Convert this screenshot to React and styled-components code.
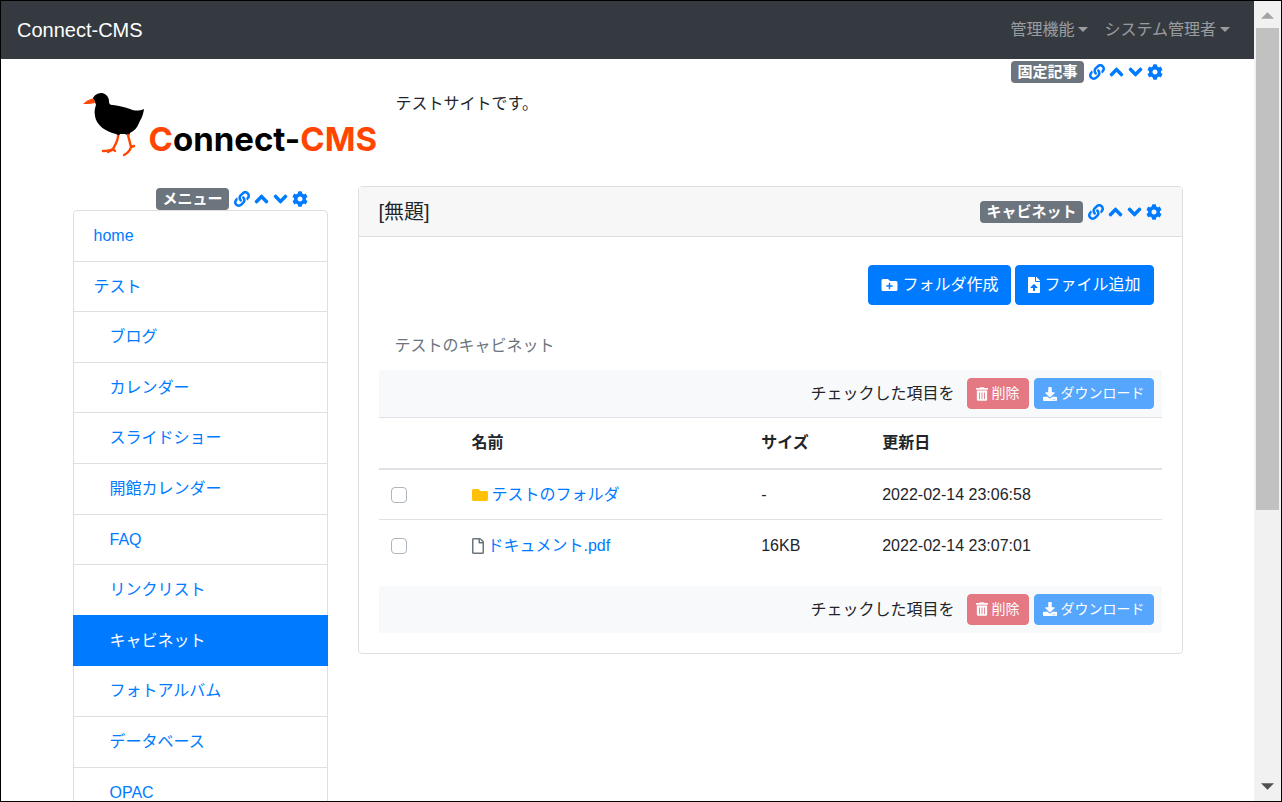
import React from "react";
import styled, { createGlobalStyle, css } from "styled-components";
import {
  FaLink, FaAngleUp, FaAngleDown, FaCog, FaFolderPlus, FaFileUpload,
  FaTrashAlt, FaDownload, FaFolder, FaRegFile,
} from "react-icons/fa";

const GlobalStyle = createGlobalStyle`
  *, *::before, *::after { box-sizing: border-box; }
  body {
    margin: 0;
    font-family: "Liberation Sans", "Noto Sans CJK JP", sans-serif;
    font-size: 16px;
    line-height: 1.6;
    color: #212529;
    background: #fff;
  }
  a { color: #007bff; text-decoration: none; }
`;

const Frame = styled.div`
  display: flex;
  height: 100vh;
  border: 1px solid #000;
  overflow: hidden;
`;

const Viewport = styled.div`
  flex: 1;
  min-width: 0;
  overflow: hidden;
`;

const ScrollTrack = styled.div`
  display: flex;
  flex-direction: column;
  align-items: center;
  width: 27px;
  padding: 11px 0;
  background: #f1f1f1;
`;

const ScrollThumb = styled.div`
  width: 23px;
  height: 62%;
  margin: 9px 0 auto;
  background: #c1c1c1;
`;

const ScrollArrow = styled.svg`
  display: block;
  width: 13px;
  height: 7px;
  fill: ${(p) => p.$color};
`;

const Navbar = styled.nav`
  display: flex;
  align-items: center;
  justify-content: space-between;
  height: 58px;
  padding: 0 16px;
  background: #343a40;
`;

const Brand = styled.a`
  color: #fff;
  font-size: 20px;
`;

const NavMenu = styled.div`
  display: flex;
`;

const NavToggle = styled.button`
  display: flex;
  align-items: center;
  gap: 4px;
  padding: 7px 8px 8px;
  border: 0;
  background: none;
  color: rgba(255, 255, 255, 0.5);
  font: inherit;
  &::after {
    content: "";
    border: 5px solid transparent;
    border-top-color: currentColor;
    border-bottom: 0;
  }
`;

const Container = styled.div`
  max-width: 1140px;
  margin: 0 auto;
`;

const FrameTools = styled.div`
  display: flex;
  align-items: center;
  justify-content: flex-end;
  gap: 4px;
  padding: ${(p) => p.$pad || "0"};
`;

const Badge = styled.span`
  margin-right: 1px;
  padding: 3px 6px;
  border-radius: 4px;
  background: #6c757d;
  color: #fff;
  font-size: 15px;
  font-weight: 700;
  line-height: 16px;
`;

const ToolIcon = styled.a`
  display: flex;
  align-items: center;
  height: 16px;
  svg {
    width: ${(p) => p.$width}px;
    height: ${(p) => p.$height || 16}px;
  }
`;

const SiteHeader = styled.header`
  padding: 2px 15px 0;
`;

const HeaderBody = styled.div`
  display: flex;
  align-items: flex-start;
  gap: 16px;
  padding: 8px 8px 7px;
`;

const LogoLink = styled.a`
  display: flex;
  gap: 4px;
  height: 68px;
`;

const Bird = styled.svg`
  width: 64px;
  height: 68px;
`;

const Wordmark = styled.span`
  width: 231px;
  padding-top: 22px;
  font-family: Inter, sans-serif;
  font-size: 33px;
  font-weight: 700;
  line-height: 52px;
  white-space: nowrap;
  color: #000;
`;

const Accent = styled.span`
  color: #ff4500;
`;

const HeaderText = styled.p`
  margin: 0;
`;

const Columns = styled.div`
  display: grid;
  grid-template-columns: 1fr 3fr;
  align-items: start;
  padding-top: 20px;
`;

const Sidebar = styled.aside`
  padding: 2px 15px 0;
`;

const Main = styled.main`
  padding: 0 15px;
`;

const MenuList = styled.nav`
  display: flex;
  flex-direction: column;
  border: 1px solid #dfdfdf;
  border-radius: 4px;
`;

const MenuItem = styled.a`
  padding: 12px 20px 12px ${(p) => (p.$sub ? 36 : 20)}px;
  border-bottom: 1px solid #dfdfdf;
  ${(p) => p.$active && css`
    margin: -1px -1px 0;
    padding-top: 13px;
    padding-left: 37px;
    border-color: #007bff;
    background: #007bff;
    color: #fff;
  `}
`;

const Card = styled.section`
  border: 1px solid #dfdfdf;
  border-radius: 4px;
`;

const CardHeader = styled.header`
  display: flex;
  align-items: center;
  justify-content: space-between;
  height: 50px;
  padding: 0 20px;
  border-bottom: 1px solid #dfdfdf;
  background: #f7f7f7;
`;

const CardTitle = styled.h2`
  margin: 0;
  font-size: 20px;
  font-weight: 400;
  line-height: 26px;
`;

const CardBody = styled.div`
  padding: 20px;
`;

const ActionBar = styled.div`
  display: flex;
  align-items: center;
  justify-content: flex-end;
  gap: ${(p) => (p.$shaded ? 5 : 4)}px;
  padding: 8px;
  background: ${(p) => (p.$shaded ? "#f8f9fa" : "none")};
`;

const ActionLabel = styled.span`
  margin-right: 7px;
`;

const Button = styled.button`
  display: flex;
  align-items: center;
  gap: 4px;
  padding: 6px 12px;
  border: 1px solid ${(p) => p.$color || "#007bff"};
  border-radius: 4px;
  background: ${(p) => p.$color || "#007bff"};
  color: #fff;
  font: inherit;
  ${(p) => p.$small && css`
    height: 31px;
    padding: 0 8px;
    font-size: 14px;
    opacity: 0.65;
  `}
`;

const Glyph = styled.span`
  display: flex;
  color: ${(p) => p.$color || "inherit"};
  svg {
    width: ${(p) => p.$width}px;
    height: ${(p) => p.$height || 16}px;
  }
`;

const Breadcrumb = styled.div`
  padding: 20px 16px 12px;
  color: #6c757d;
`;

const FileTable = styled.table`
  width: 100%;
  margin-bottom: 15px;
  border-collapse: collapse;
  table-layout: fixed;
`;

const Th = styled.th`
  width: ${(p) => p.$width || "auto"};
  padding: 12px;
  border-top: 1px solid #dee2e6;
  border-bottom: 2px solid #dee2e6;
  text-align: left;
`;

const Td = styled.td`
  height: 51px;
  padding: 12px;
  border-top: 1px solid #dee2e6;
`;

const FileName = styled.span`
  display: flex;
  align-items: center;
  gap: 4px;
`;

const Checkbox = styled.input`
  appearance: none;
  display: block;
  width: 16px;
  height: 16px;
  margin: 0;
  border: 1px solid #adb5bd;
  border-radius: 4px;
  background: #fff;
`;

const menu = [
  ["home", false], ["テスト", false], ["ブログ", true], ["カレンダー", true],
  ["スライドショー", true], ["開館カレンダー", true], ["FAQ", true],
  ["リンクリスト", true], ["キャビネット", true], ["フォトアルバム", true],
  ["データベース", true], ["OPAC", true],
];

const files = [
  {
    name: "テストのフォルダ",
    size: "-",
    date: "2022-02-14 23:06:58",
    icon: <Glyph $width={16} $color="#ffc107"><FaFolder /></Glyph>,
  },
  {
    name: "ドキュメント.pdf",
    size: "16KB",
    date: "2022-02-14 23:07:01",
    icon: <Glyph $width={12} $color="#6c757d"><FaRegFile /></Glyph>,
  },
];

function Tools({ label, pad }) {
  return (
    <FrameTools $pad={pad}>
      <Badge>{label}</Badge>
      <ToolIcon href="#link" aria-label="リンク" $width={16}><FaLink /></ToolIcon>
      <ToolIcon href="#up" aria-label="上へ" $width={15} $height={22}><FaAngleUp /></ToolIcon>
      <ToolIcon href="#down" aria-label="下へ" $width={15} $height={22}><FaAngleDown /></ToolIcon>
      <ToolIcon href="#settings" aria-label="設定" $width={16}><FaCog /></ToolIcon>
    </FrameTools>
  );
}

function SelectionBar() {
  return (
    <ActionBar $shaded>
      <ActionLabel>チェックした項目を</ActionLabel>
      <Button $small $color="#dc3545"><Glyph $width={12} $height={14}><FaTrashAlt /></Glyph>削除</Button>
      <Button $small><Glyph $width={14} $height={14}><FaDownload /></Glyph>ダウンロード</Button>
    </ActionBar>
  );
}

function Logo() {
  return (
    <LogoLink href="#home">
      <Bird viewBox="0 0 64 68" aria-hidden="true">
        <path d="M13 7 C9 8 5 10 2 13 C6 13 10 13 14 12 Z" fill="#ff4500" />
        <path d="M12 7 C14 3 18 2 21 2 C26 3 28 7 28 10 C28 13 29 14 32 14 C39 15 44 16 49 18 C54 20 58 20 63 18 C62 25 60 28 58 32 C56 37 53 40 49 42 L48 45 L44 43 L39 43 L38 45 L35 43 C25 41 15 34 14 25 C13 20 14 17 15 14 C14 12 14 9 12 7 Z" />
        <g fill="none" stroke="#ff4500" strokeWidth="2.400" strokeLinecap="round" strokeLinejoin="round">
          <path d="M37 45 C37 50 34 54 32 58 C29 60 25 60 22 60 M32 58 L34 60 M31 59 L27 61" />
          <path d="M47 44 C48 48 49 52 50 56 C49 60 47 62 43 64 M50 56 L53 55" />
        </g>
      </Bird>
      <Wordmark><Accent>C</Accent>onnect-<Accent>CMS</Accent></Wordmark>
    </LogoLink>
  );
}

export default function App() {
  return (
    <Frame>
      <GlobalStyle />
      <Viewport>
        <Navbar>
          <Brand href="#home">Connect-CMS</Brand>
          <NavMenu>
            <NavToggle>管理機能</NavToggle>
            <NavToggle>システム管理者</NavToggle>
          </NavMenu>
        </Navbar>
        <Container>
          <SiteHeader>
            <Tools label="固定記事" pad="0 20px" />
            <HeaderBody>
              <Logo />
              <HeaderText>テストサイトです。</HeaderText>
            </HeaderBody>
          </SiteHeader>
          <Columns>
            <Sidebar>
              <Tools label="メニュー" pad="0 20px" />
              <MenuList>
                {menu.map(([name, sub]) => (
                  <MenuItem key={name} href="#page" $sub={sub} $active={name === "キャビネット"}>{name}</MenuItem>
                ))}
              </MenuList>
            </Sidebar>
            <Main>
              <Card>
                <CardHeader>
                  <CardTitle>[無題]</CardTitle>
                  <Tools label="キャビネット" />
                </CardHeader>
                <CardBody>
                  <ActionBar>
                    <Button><Glyph $width={17}><FaFolderPlus /></Glyph>フォルダ作成</Button>
                    <Button><Glyph $width={12}><FaFileUpload /></Glyph>ファイル追加</Button>
                  </ActionBar>
                  <Breadcrumb>テストのキャビネット</Breadcrumb>
                  <SelectionBar />
                  <FileTable>
                    <thead>
                      <tr>
                        <Th $width="81px" aria-label="選択" />
                        <Th $width="37%">名前</Th>
                        <Th $width="121px">サイズ</Th>
                        <Th>更新日</Th>
                      </tr>
                    </thead>
                    <tbody>
                      {files.map((f) => (
                        <tr key={f.name}>
                          <Td><Checkbox type="checkbox" aria-label={f.name} /></Td>
                          <Td><FileName>{f.icon}<a href="#file">{f.name}</a></FileName></Td>
                          <Td>{f.size}</Td>
                          <Td>{f.date}</Td>
                        </tr>
                      ))}
                    </tbody>
                  </FileTable>
                  <SelectionBar />
                </CardBody>
              </Card>
            </Main>
          </Columns>
        </Container>
      </Viewport>
      <ScrollTrack aria-hidden="true">
        <ScrollArrow viewBox="0 0 14 7" $color="#a3a3a3"><path d="M0 7 7 0 14 7z" /></ScrollArrow>
        <ScrollThumb />
        <ScrollArrow viewBox="0 0 14 7" $color="#505050"><path d="M0 0 7 7 14 0z" /></ScrollArrow>
      </ScrollTrack>
    </Frame>
  );
}
